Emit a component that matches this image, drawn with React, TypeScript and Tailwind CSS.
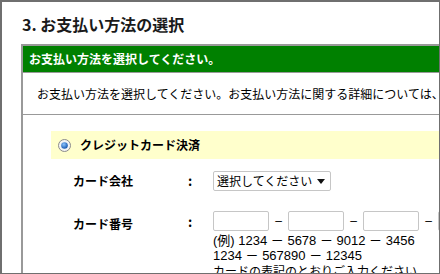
const jp = { fontFamily: '"Noto Sans CJK JP", "Liberation Sans", sans-serif' };
const mixed = { fontFamily: '"Liberation Sans", "Noto Sans CJK JP", sans-serif' };

function Radio() {
  return (
    <svg width="13" height="13" viewBox="0 0 13 13" className="shrink-0">
      <defs>
        <radialGradient id="dot" cx="40%" cy="35%" r="60%">
          <stop offset="0%" stopColor="#8cc4ff" />
          <stop offset="100%" stopColor="#1f5fb5" />
        </radialGradient>
      </defs>
      <circle cx="6.5" cy="6.5" r="6" fill="#f4f4f4" stroke="#8a8a8a" strokeWidth="1" />
      <circle cx="6.5" cy="6.5" r="3.3" fill="url(#dot)" />
    </svg>
  );
}

function CardBox() {
  return <div className="w-[56px] h-[20px] border border-[#c6c6c6] bg-white rounded-[2px]" />;
}

function Dash() {
  return <span className="w-[19px] text-center text-[12px] text-black" style={mixed}>–</span>;
}

export default function App() {
  return (
    <div
      className="w-[440px] h-[274px] overflow-hidden bg-white border-t-2 border-l-2 border-r border-b border-[#6f6f6f]"
      style={jp}
    >
      <h2 className="mt-[13px] ml-[20px] text-[16px] leading-[18px] font-bold text-[#1a1a1a] whitespace-nowrap">
        3. お支払い方法の選択
      </h2>

      <div className="mt-[11px] ml-[19px] w-[640px] border-2 border-r-0 border-[#999999]">
        <div className="h-[26px] bg-[#008000] pl-[6px] flex items-center text-white text-[12px] font-bold whitespace-nowrap">
          お支払い方法を選択してください。
        </div>
        <div className="h-[43px] border-t border-[#999999] border-b pl-[14px] flex items-center text-[12px] text-black whitespace-nowrap">
          お支払い方法を選択してください。お支払い方法に関する詳細については、ヘルプをご覧ください。
        </div>

        <div className="pt-[16px] pl-[28px]">
          <div className="h-[28px] bg-[#ffffcc] pl-[7px] flex items-center gap-[9px]">
            <Radio />
            <span className="text-[12px] font-bold text-black whitespace-nowrap">クレジットカード決済</span>
          </div>

          <div className="pl-[22px] pt-[12px] flex flex-col gap-[20px]">
            <div className="flex items-center">
              <span className="w-[115px] text-[12px] font-bold text-black">カード会社</span>
              <span className="w-[25px] text-[13px] font-bold text-black">:</span>
              <div className="w-[118px] h-[20px] border border-[#c6c6c6] rounded-[2px] flex items-center justify-between pl-[3px] pr-[5px]">
                <span className="text-[12px] leading-none text-black">選択してください</span>
                <svg width="8" height="5" viewBox="0 0 8 5">
                  <path d="M0 0H8L4 5Z" fill="#111" />
                </svg>
              </div>
            </div>

            <div className="flex items-start">
              <span className="w-[115px] pt-[4px] text-[12px] font-bold text-black">カード番号</span>
              <span className="w-[25px] pt-[1px] text-[13px] font-bold text-black">:</span>
              <div className="flex flex-col">
                <div className="flex items-center">
                  <CardBox />
                  <Dash />
                  <CardBox />
                  <Dash />
                  <CardBox />
                  <Dash />
                  <CardBox />
                </div>
                <div className="mt-[2px] text-[13px] leading-[15px] text-black whitespace-nowrap" style={mixed}>
                  <div>(例) 1234 － 5678 － 9012 － 3456</div>
                  <div>1234 － 567890 － 12345</div>
                  <div style={jp} className="text-[12px]">カードの表記のとおりご入力ください。</div>
                </div>
              </div>
            </div>
          </div>
        </div>
      </div>
    </div>
  );
}
